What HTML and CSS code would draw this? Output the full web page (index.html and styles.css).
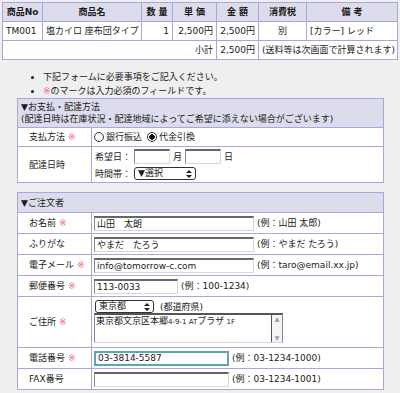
FILE: index.html
```html
<!DOCTYPE html>
<html lang="ja">
<head>
  <meta charset="UTF-8">
  <title>ご注文フォーム</title>
  <link rel="stylesheet" href="styles.css">
</head>
<body>
  <table class="cart">
    <colgroup>
      <col style="width:40px"><col style="width:99px"><col style="width:31px"><col style="width:44px">
      <col style="width:42px"><col style="width:48px"><col>
    </colgroup>
    <tr>
      <th>商品No</th><th>商品名</th><th>数 量</th><th>単 価</th><th>金 額</th><th>消費税</th><th>備 考</th>
    </tr>
    <tr>
      <td>TM001</td><td>塩カイロ 座布団タイプ</td><td class="num">1</td><td class="num">2,500円</td>
      <td class="num">2,500円</td><td class="center">別</td><td>[カラー] レッド</td>
    </tr>
    <tr>
      <td colspan="4" class="num">小計</td><td class="num">2,500円</td><td colspan="2">(送料等は次画面で計算されます)</td>
    </tr>
  </table>

  <ul class="notes">
    <li>下記フォームに必要事項をご記入ください。</li>
    <li><span class="req">※</span>のマークは入力必須のフィールドです。</li>
  </ul>

  <div class="form-box">
    <div class="box-head tall">▼お支払・配達方法<br>(配達日時は在庫状況・配達地域によってご希望に添えない場合がございます)</div>
    <div class="row row-pay">
      <div class="label">支払方法 <span class="req">※</span></div>
      <div class="value">
        <label class="radio"><span class="dot"></span>銀行振込</label>
        <label class="radio"><span class="dot on"></span>代金引換</label>
      </div>
    </div>
    <div class="row row-date">
      <div class="label">配達日時</div>
      <div class="value stack">
        <div class="line">希望日：<span class="field w-day"></span>月<span class="field w-day"></span>日</div>
        <div class="line">時間帯：<span class="select w-time">▼選択<svg class="arrows" width="6" height="8" viewBox="0 0 6 8"><path d="M3 0L6 3H0Z M3 8L6 5H0Z" fill="#222"/></svg></span></div>
      </div>
    </div>
  </div>

  <div class="form-box second">
    <div class="box-head">▼ご注文者</div>
    <div class="row">
      <div class="label">お名前 <span class="req">※</span></div>
      <div class="value"><span class="field w-long">山田　太朗</span><span class="eg">(例：山田 太郎)</span></div>
    </div>
    <div class="row">
      <div class="label">ふりがな</div>
      <div class="value"><span class="field w-long">やまだ　たろう</span><span class="eg">(例：やまだ たろう)</span></div>
    </div>
    <div class="row">
      <div class="label">電子メール <span class="req">※</span></div>
      <div class="value"><span class="field w-long">info@tomorrow-c.com</span><span class="eg">(例：taro@email.xx.jp)</span></div>
    </div>
    <div class="row">
      <div class="label">郵便番号 <span class="req">※</span></div>
      <div class="value"><span class="field w-zip">113-0033</span><span class="eg">(例：100-1234)</span></div>
    </div>
    <div class="row row-addr">
      <div class="label">ご住所 <span class="req">※</span></div>
      <div class="value stack">
        <div class="line"><span class="select w-pref">東京都<svg class="arrows" width="6" height="8" viewBox="0 0 6 8"><path d="M3 0L6 3H0Z M3 8L6 5H0Z" fill="#222"/></svg></span><span class="eg">(都道府県)</span></div>
        <div class="textarea">
          <div class="ta-text">東京都文京区本郷<small>4-9-1 AT</small>プラザ<small> 1F</small></div>
          <div class="ta-bar"><span>▲</span><span>▼</span></div>
        </div>
      </div>
    </div>
    <div class="row">
      <div class="label">電話番号 <span class="req">※</span></div>
      <div class="value"><span class="field w-tel focus">03-3814-5587</span><span class="eg">(例：03-1234-1000)</span></div>
    </div>
    <div class="row">
      <div class="label">FAX番号</div>
      <div class="value"><span class="field w-tel"></span><span class="eg">(例：03-1234-1001)</span></div>
    </div>
  </div>
</body>
</html>
```

FILE: styles.css
```css
body {
  margin: 0;
  padding: 2px 3px 0 2px;
  background-color: #efefef;
  color: #1a1a1a;
  font-family: "DejaVu Sans", "Noto Sans CJK JP", sans-serif;
  font-size: 9px;
  line-height: 12px;
}

.cart {
  width: 396px;
  table-layout: fixed;
  border-collapse: collapse;
  background-color: #fff;
  border: 1px solid #a8a8d8;
}

.cart th,
.cart td {
  border: 1px solid #a8a8d8;
  height: 18px;
  padding: 0 3px;
  white-space: nowrap;
  overflow: hidden;
}

.cart th {
  background-color: #dcdcec;
  font-weight: bold;
  text-align: center;
}

.num {
  text-align: right;
}

.center {
  text-align: center;
}

.notes {
  margin: 10px 0 0 0;
  padding: 0 0 0 41px;
  list-style: disc;
  line-height: 14px;
}

.req {
  color: #f0607a;
}

.form-box {
  width: 367px;
  box-sizing: border-box;
  margin-left: 15px;
  background: #fff;
  border: 1px solid #a8a8d8;
}

.form-box.second {
  margin-top: 9px;
}

.box-head {
  background-color: #dcdcec;
  height: 19px;
  padding: 0 3px;
  display: flex;
  align-items: center;
}

.box-head.tall {
  display: block;
  height: 28px;
  box-sizing: border-box;
  padding: 2px 3px;
}

.row {
  display: grid;
  grid-template-columns: 74px 1fr;
  height: 21px;
  box-sizing: border-box;
  border-top: 1px solid #a8a8d8;
  white-space: nowrap;
}

.row-pay {
  height: 19px;
}

.row-date {
  height: 36px;
}

.row-addr {
  height: 51px;
}

.label {
  display: flex;
  align-items: center;
  gap: 3px;
  padding-left: 11px;
  border-right: 1px solid #a8a8d8;
}

.value {
  display: flex;
  align-items: center;
  padding-left: 2px;
}

.value.stack {
  flex-direction: column;
  align-items: flex-start;
  justify-content: flex-start;
}

.row-date .value.stack {
  padding-top: 1px;
}

.row-addr .value.stack {
  padding-top: 3px;
}

.line {
  display: flex;
  align-items: center;
  gap: 3px;
}

.row-date .line {
  height: 17px;
  padding-left: 1px;
}

.radio {
  display: inline-flex;
  align-items: center;
  gap: 2px;
  margin-right: 5px;
}

.dot {
  display: inline-block;
  width: 8px;
  height: 8px;
  border: 1px solid #333;
  border-radius: 50%;
}

.dot.on {
  background: radial-gradient(circle, #111 0 2.5px, #fff 3px);
}

.field {
  display: inline-block;
  box-sizing: border-box;
  height: 15px;
  padding: 0 2px;
  background: #fff;
  border-top: 2px solid #666;
  border-left: 1px solid #888;
  border-right: 1px solid #d8d8d8;
  border-bottom: 1px solid #d8d8d8;
  line-height: 12px;
}

.field.focus {
  border: 2px solid #5fa4b6;
  line-height: 11px;
}

.w-long { width: 160px; }
.w-zip { width: 84px; }
.w-tel { width: 135px; }
.w-day { width: 36px; }

.eg {
  margin-left: 3px;
}

.select {
  display: inline-flex;
  justify-content: space-between;
  align-items: center;
  box-sizing: border-box;
  height: 13px;
  padding: 0 3px;
  border: 1px solid #333;
  border-radius: 3px;
  background: #fff;
  line-height: 11px;
}

.w-time { width: 62px; }
.w-pref { width: 59px; margin-left: 1px; }

.textarea {
  display: flex;
  width: 189px;
  height: 30px;
  box-sizing: border-box;
  border-top: 2px solid #555;
  border-left: 1px solid #888;
  border-right: 1px solid #888;
  border-bottom: 1px solid #d8d8d8;
  background: #fff;
}

.ta-text {
  flex: 1;
  padding-left: 1px;
  line-height: 12px;
}

.ta-text small {
  font-size: 7px;
}

.ta-bar {
  width: 10px;
  display: flex;
  flex-direction: column;
  justify-content: space-between;
  border-left: 1px solid #555;
  background: #f4f4f4;
  font-size: 6px;
  line-height: 8px;
  text-align: center;
  color: #999;
}
```
